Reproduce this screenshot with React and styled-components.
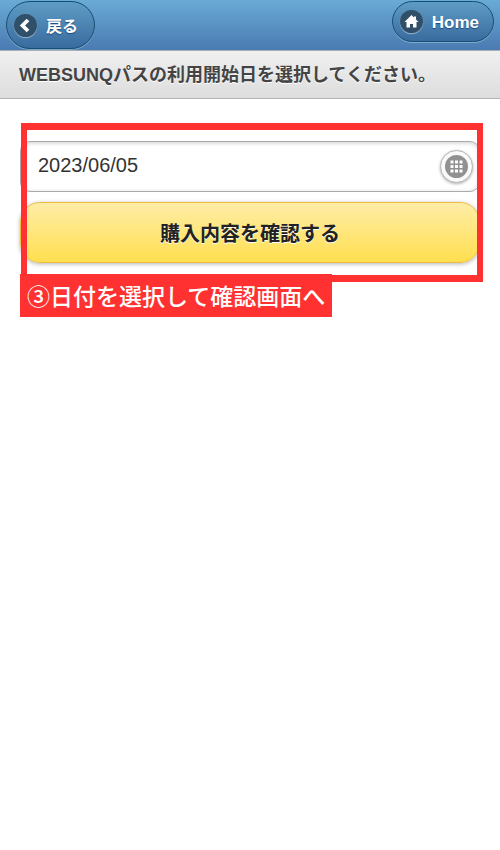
import React, { useState } from "react";
import styled, { createGlobalStyle } from "styled-components";

const GlobalStyle = createGlobalStyle`
  body {
    margin: 0;
    background: #fff;
    color: #333;
    font-family: "Liberation Sans", Arial, "Noto Sans CJK JP", sans-serif;
  }

  *, *::before, *::after {
    box-sizing: border-box;
  }
`;

const Page = styled.div`
  min-height: 100vh;
`;

const Header = styled.header`
  display: flex;
  justify-content: space-between;
  align-items: flex-start;
  height: 50px;
  padding: 1px 6px 0;
  background: linear-gradient(#6aaad6, #4a7bb2);
`;

const NavButton = styled.button`
  display: flex;
  align-items: center;
  gap: 9px;
  height: ${props => (props.$tall ? 48 : 41)}px;
  padding: 0 ${props => (props.$tall ? 16 : 14)}px 0 7px;
  border: 1px solid #145072;
  border-radius: 24px;
  background: linear-gradient(#5f9cc5, #396b9e);
  box-shadow: 0 1px 0 rgba(255, 255, 255, 0.3);
  color: #fff;
  font: bold ${props => (props.$tall ? 16 : 17)}px/24px "Liberation Sans", Arial,
    "Noto Sans CJK JP", sans-serif;
  text-shadow: 0 1px 1px #194b7e;
  cursor: pointer;
`;

const NavLabel = styled.span`
  padding-top: 3px;
`;

const IconDisc = styled.span`
  display: flex;
  align-items: center;
  justify-content: center;
  width: 23px;
  height: 23px;
  border-radius: 50%;
  background: #304f69;
  box-shadow: 0 1px 1px rgba(255, 255, 255, 0.45);
`;

const TitleBar = styled.div`
  height: 49px;
  padding: 0 19px;
  border-top: 1px solid #a9afb5;
  border-bottom: 1px solid #b3b3b3;
  background: linear-gradient(#f0f0f0, #dddddd);
`;

const Title = styled.h1`
  margin: 0;
  color: #444;
  font-size: 18px;
  font-weight: bold;
  line-height: 44px;
  text-shadow: 0 1px 0 #fff;
  white-space: nowrap;
`;

const Kana = styled.span`
  font-family: "Noto Sans CJK JP", sans-serif;
`;

const Content = styled.main`
  position: relative;
  padding: 42px 20px 60px;
`;

const DateField = styled.label`
  display: flex;
  align-items: center;
  height: 51px;
  margin-bottom: 10px;
  padding: 0 6px 0 17px;
  border: 1px solid #aaa;
  border-radius: 10px;
  background: #fff;
  box-shadow: inset 0 1px 4px rgba(0, 0, 0, 0.2);
`;

const DateInput = styled.input`
  flex: 1;
  min-width: 0;
  padding: 0 0 4px;
  border: 0;
  outline: 0;
  background: transparent;
  color: #333;
  font: 20px/28px "Liberation Sans", Arial, sans-serif;
`;

const CalendarButton = styled.button`
  display: flex;
  align-items: center;
  justify-content: center;
  width: 33px;
  height: 33px;
  padding: 0;
  border: 1px solid #b5b5b5;
  border-radius: 50%;
  background: #fafafa;
  box-shadow: 0 1px 3px rgba(0, 0, 0, 0.3);
  cursor: pointer;
`;

const ConfirmButton = styled.button`
  display: block;
  width: 100%;
  height: 61px;
  padding: 1px 0 0;
  border: 1px solid #edbd43;
  border-radius: 20px;
  background: linear-gradient(#ffeda7, #ffdf4f);
  box-shadow: 0 1px 4px rgba(0, 0, 0, 0.3);
  color: #222;
  font: 700 20px/30px "Noto Sans CJK JP", sans-serif;
  text-shadow: 0 1px 0 #fff;
  cursor: pointer;
`;

/* callout drawn over the form */
const Highlight = styled.div`
  position: absolute;
  top: 24px;
  right: 17px;
  left: 21px;
  height: 159px;
  border: 6px solid #ff3131;
  border-width: 7px 6px;
  pointer-events: none;
`;

const Step = styled.p`
  position: absolute;
  top: 175px;
  left: 20px;
  margin: 0;
  padding: 0 7px;
  background: #ff3131;
  color: #fff;
  font: 500 23px/43px "Noto Sans CJK JP", sans-serif;
  white-space: nowrap;
`;

const App = () => {
  const [date, setDate] = useState("2023/06/05");

  return (
    <Page>
      <GlobalStyle />
      <Header>
        <NavButton type="button" $tall>
          <IconDisc>
            <svg width="15" height="15" viewBox="0 0 15 15" aria-hidden="true">
              <path
                d="M10 2 4.5 7.5 10 13"
                fill="none"
                stroke="#fff"
                strokeWidth="3.8"
              />
            </svg>
          </IconDisc>
          <NavLabel>戻る</NavLabel>
        </NavButton>
        <NavButton type="button">
          <IconDisc>
            <svg width="15" height="15" viewBox="0 0 15 15" aria-hidden="true">
              <path
                d="M7.5 1 .5 8h2v5.500H6V10h3v3.500h3.500V8h2L12 5.500V2.500h-2v1z"
                fill="#fff"
              />
            </svg>
          </IconDisc>
          <NavLabel>Home</NavLabel>
        </NavButton>
      </Header>
      <TitleBar>
        <Title>
          WEBSUNQ<Kana>パスの利用開始日を選択してください。</Kana>
        </Title>
      </TitleBar>
      <Content>
        <DateField>
          <DateInput
            aria-label="利用開始日"
            value={date}
            onChange={e => setDate(e.target.value)}
          />
          <CalendarButton type="button" aria-label="カレンダー">
            <svg width="23" height="23" viewBox="0 0 23 23" aria-hidden="true">
              <circle cx="11.5" cy="11.5" r="11.5" fill="#919191" />
              {[5.5, 10, 14.5].map(y =>
                [5.5, 10, 14.5].map(x => (
                  <rect
                    key={`${x}-${y}`}
                    x={x}
                    y={y}
                    width="3"
                    height="3"
                    fill="#fff"
                  />
                ))
              )}
            </svg>
          </CalendarButton>
        </DateField>
        <ConfirmButton type="button">購入内容を確認する</ConfirmButton>
        <Highlight />
        <Step>③日付を選択して確認画面へ</Step>
      </Content>
    </Page>
  );
};

export default App;
